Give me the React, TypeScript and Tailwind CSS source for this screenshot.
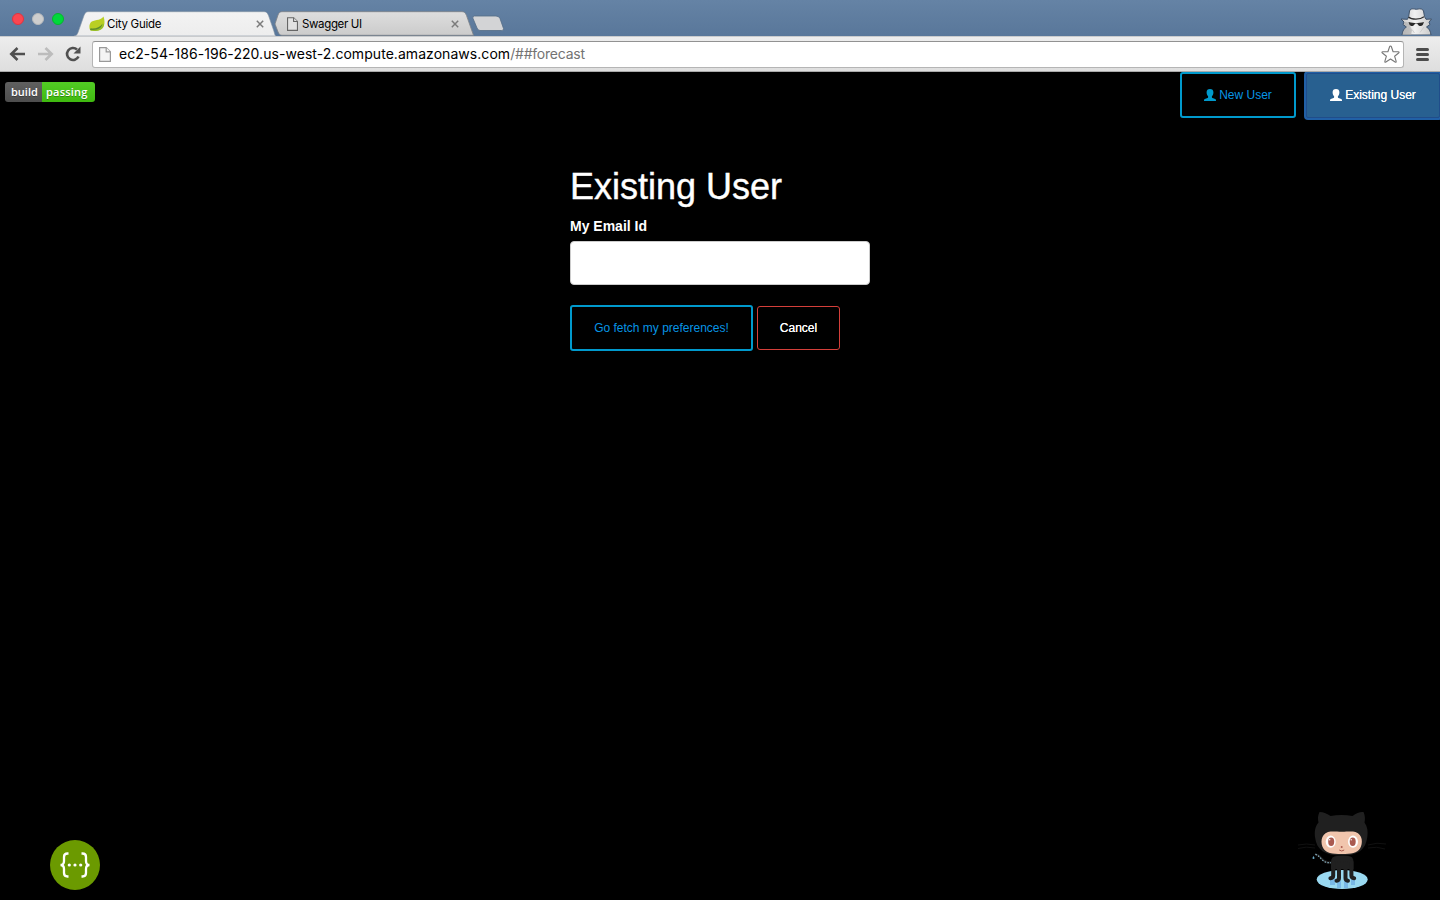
import React from "react";

function PersonIcon() {
  return (
    <svg width="12" height="12" viewBox="0 0 12 12" className="shrink-0" fill="currentColor">
      <path d="M6 0C8.300 0 9.400 1.200 9.400 3.300c0 1.800-.5 3.100-1.500 4v1c0 .4.200.6.600.8l2.700.9c.6.200.8.700.8 1.500v.5H0v-.5c0-.8.200-1.300.8-1.500l2.700-.9c.4-.2.600-.4.600-.8v-1c-1-.9-1.500-2.200-1.500-4C2.600 1.200 3.700 0 6 0z" />
    </svg>
  );
}

function PageIcon({ width, height, stroke, fill }: { width: number; height: number; stroke: string; fill: string }) {
  return (
    <svg width={width} height={height} viewBox="0 0 12 15" className="shrink-0" fill={fill} stroke={stroke} strokeWidth="1.2">
      <path d="M.6.6h6.600l4.200 4.200v9.600H.6z" />
      <path d="M7.200.6v4.200h4.200" />
    </svg>
  );
}

function LeafIcon() {
  return (
    <svg width="16" height="16" viewBox="0 0 16 16" className="shrink-0">
      <path d="M14.500.5c1.500 4 1.500 9.100-1.200 12-2.300 2.400-7.500 3-11.700 2C.1 13-.1 8.800 1.700 6.500 4.200 3.400 11.200 5.200 14.500.5z" fill="#b9cf24" />
      <path d="M1.500 14.300c5.300 1.400 9.800.3 12-2.300 1-1.300 1.500-3 1.600-4.800-2.600 4-7 6-13.600 6z" fill="#94bd29" />
      <path d="M2.800 12.600c4.500.2 8.400-1.500 10.800-5.100-.8 4.400-4.600 6.600-10.400 6.400z" fill="#5e8d2d" />
      <circle cx="2.100" cy="13.300" r="1" fill="#5e8d2d" />
    </svg>
  );
}

function CloseIcon() {
  return (
    <svg width="8" height="8" viewBox="0 0 8 8" className="shrink-0" stroke="#7b7b7b" strokeWidth="1.500">
      <path d="M.8.8l6.400 6.400M7.200.8L.8 7.200" />
    </svg>
  );
}

function IncognitoIcon() {
  return (
    <svg width="34" height="28" viewBox="0 0 34 28" className="block">
      <defs>
        <linearGradient id="coat" x1="0" x2="1">
          <stop offset="0" stopColor="#c4c4c4" />
          <stop offset=".45" stopColor="#f1f1f1" />
          <stop offset="1" stopColor="#c9c9c9" />
        </linearGradient>
      </defs>
      <path d="M3 28c.5-4 2-6.500 4.500-8L4 17.500l1-2.500-3-3 6.500.3c.4-1.300 1-1.800 1.200-2.800L10.500 4c.4-2 3-2.500 5-2 1.500.4 2 .4 3.500 0 2.500-.6 5 .2 5.500 2l1 5.500c.4 1 1 1.500 1.500 2.800l5.500-.3-2.500 3.200 1 2.300-3.500 2.500c2.500 1.500 4 4 4.500 8z" fill="url(#coat)" stroke="#3f526a" strokeWidth="1" strokeLinejoin="round" />
      <path d="M3.500 28c.5-3.500 2-6 5-7.700L5 17.500l.5-2.500 4 .5 3.500 7.500-1 5z" fill="#a8a8a8" opacity=".6" />
      <path d="M9.500 10c3 2.700 11.500 3 15.500-.2" fill="none" stroke="#2f2f2f" strokeWidth="1.300" />
      <path d="M9.500 15c3 .9 5.500 1 7.500 1s5.500-.1 8-1l-1 2.500c-.8 1.900-4 2-5 .2l-.8-1.200h-2l-.9 1.200c-1.200 1.800-4 1.700-4.900-.2z" fill="#292929" />
      <path d="M25 20l-4 5.500M13 22.500l2.500 3.500" fill="none" stroke="#c5c5c5" strokeWidth=".8" />
    </svg>
  );
}

function Octocat() {
  return (
    <svg width="88" height="80" viewBox="0 0 88 80" className="block">
      <ellipse cx="44.200" cy="69.500" rx="25.500" ry="9.500" fill="#9ad9f1" />
      <path d="M32 68h5v7h-5zM39 71h4v7h-4zM46 71h4v7h-4zM53 68h4v7h-4z" fill="#79b8e6" />
      <path d="M35 52.500c-6 1-9-1-11.500-4-1.500-2-3-3.500-6.500-4.500" fill="none" stroke="#202020" strokeWidth="2.200" />
      <path d="M34 52.500c-6 1-8.500-1-11-4-1.500-2-3-3-6-4.500" fill="none" stroke="#8db9cc" strokeWidth="1.100" strokeDasharray="1.500 1.500" />
      <path d="M15.500 46q2 3 0 3t0-3z" fill="#6ba9c6" />
      <path d="M33 52q0-6 6-6h11q5.500 0 5.500 6v7H33z" fill="#202020" />
      <g fill="none" stroke="#202020" strokeLinecap="round" strokeWidth="4">
        <path d="M35.200 52v13.500q0 2.500-2.800 2.800M41 53v15q0 2.500-2.500 2.800M47.500 53v15q0 2.500 2.500 2.800M53.400 52v13.500q0 2.500 2.800 2.800" />
      </g>
      <path d="M21.500 2c4 0 8 2 11 4 7-1.500 15-1.500 22 0 4-3 8-4.500 11-4 1.700 4 1.700 7 1 10.500 3 4 3.600 9 2.800 14.500C67.500 40 60 45.500 43.500 45.500S18.500 40 17 27c-.6-5.500 0-10.500 3.500-14.500-.8-3.500-.8-7 1-10.500z" fill="#202020" />
      <path d="M30 22c4-1 8-.3 13.700-.3S53.500 21 57.500 22c7.500 2.500 7.500 11.500 4.500 16.500-2.800 4.500-8.500 5.500-18.300 5.500s-15.500-1-18.300-5.500C22.400 33.500 22.500 24.500 30 22z" fill="#f1c5ad" />
      <g fill="#fff"><ellipse cx="32.700" cy="31.700" rx="5" ry="6.100" /><ellipse cx="55" cy="31.700" rx="5" ry="6.100" /></g>
      <g fill="#aa5a50"><ellipse cx="33.200" cy="31.700" rx="3" ry="4.200" /><ellipse cx="54.700" cy="31.700" rx="3" ry="4.200" /></g>
      <g fill="#fff"><circle cx="31.700" cy="29.700" r=".7" /><circle cx="53.200" cy="29.700" r=".7" /></g>
      <circle cx="43.700" cy="37" r="1" fill="#ad5c51" />
      <path d="M41.200 40q2.500 2 5 0" fill="none" stroke="#ad5c51" />
      <path d="M17 35Q8 33 0 35M17 38Q8 36 0 38.500M70 35q9-3 18-1M70 38q9-2 17 1" fill="none" stroke="#151515" strokeWidth=".8" />
    </svg>
  );
}

function Tab({ title, active, icon }: { title: string; active?: boolean; icon: React.ReactNode }) {
  return (
    <div className={active ? "relative z-10 h-[25px] w-[202px] shrink-0" : "relative -ml-[3px] h-[25px] w-[201px] shrink-0"}>
      <svg className="absolute inset-0" width="202" height="25" viewBox="0 0 202 25">
        <defs>
          <linearGradient id="activeTab" x1="0" y1="0" x2="0" y2="1">
            <stop offset="0" stopColor="#f3f3f3" />
            <stop offset="1" stopColor="#ededed" />
          </linearGradient>
          <linearGradient id="idleTab" x1="0" y1="0" x2="0" y2="1">
            <stop offset="0" stopColor="#dedede" />
            <stop offset="1" stopColor="#cbcbcb" />
          </linearGradient>
        </defs>
        {active ? (
          <path d="M0 25c2 0 3-1 4-3.500L10 4.500C11 2 12 .7 14 .7h176c2.500 0 3.500 1.300 4.500 3.800l5 14.500c1 3 1.500 6 2.500 6z" fill="url(#activeTab)" stroke="#8795a5" strokeWidth=".6" />
        ) : (
          <path d="M2 13L5 4C6 1.500 7 .7 9 .7h180c2.500 0 3.500 1.300 4.500 3.800l7 19.800H9c-2 0-3-1-4-3.500z" fill="url(#idleTab)" stroke="#7d8287" strokeWidth=".8" />
        )}
      </svg>
      <div className={active ? "relative flex h-full items-center pr-[12px] pl-[15px]" : "relative flex h-full items-center pr-[15px] pl-[14px]"}>
        {icon}
        <span className={active ? "ml-[2px] text-[11.500px] leading-4 tracking-[-0.25px] text-black" : "ml-1 text-[11.500px] leading-4 tracking-[-0.35px] text-black"}>{title}</span>
        <span className="ml-auto"><CloseIcon /></span>
      </div>
    </div>
  );
}

function BrowserHeader() {
  return (
    <header className="font-[Inter,sans-serif]">
      <div className="flex h-[36px] bg-linear-to-b from-[#6583a5] to-[#59779a] pt-[11px]">
        <div className="flex w-[74px] shrink-0 gap-2 pt-[2px] pl-3">
          <span className="size-3 shrink-0 rounded-full border border-[#df3440] bg-[#fc4650]" />
          <span className="size-3 shrink-0 rounded-full border border-[#b7b9bb] bg-[#cecece]" />
          <span className="size-3 shrink-0 rounded-full border border-[#06b52d] bg-[#00d83b]" />
        </div>
        <Tab title="City Guide" active icon={<LeafIcon />} />
        <Tab title="Swagger UI" icon={<PageIcon width={11} height={14} stroke="#666" fill="#e2e2e2" />} />
        <svg width="34" height="18" viewBox="0 0 34 18" className="-ml-[3px] mt-[4px]">
          <path d="M3.500 1H25q3 0 4 2.500l3.500 10q.7 2-2 2H9q-2 0-3-2.500L2 3.500Q1 1 3.500 1z" fill="#d3d4d6" stroke="#536c87" strokeWidth=".8" />
        </svg>
        <div className="-mt-[4px] mr-[7px] ml-auto"><IncognitoIcon /></div>
      </div>
      <div className="flex h-[36px] items-center border-t border-b border-t-[#c9cbcd] border-b-[#aaa] bg-linear-to-b from-[#ededed] to-[#dedede]">
        <div className="flex w-[92px] shrink-0 items-center pl-[9px]">
          <svg width="17" height="14" viewBox="0 0 17 14" fill="none" stroke="#505050" strokeWidth="2.600"><path d="M16 7H3M8.500 1L2.300 7l6.200 6" /></svg>
          <svg width="17" height="14" viewBox="0 0 17 14" className="ml-[11px]" fill="none" stroke="#bcbcbc" strokeWidth="2.600"><path d="M1 7h13M8.500 1l6.200 6-6.200 6" /></svg>
          <svg width="16" height="16" viewBox="0 0 16 16" className="ml-[11px]"><path d="M13.500 10.500A6 6 0 1 1 12 3.500" fill="none" stroke="#505050" strokeWidth="2.600" /><path d="M15.500.5v7h-7z" fill="#505050" /></svg>
        </div>
        <div className="flex h-[27px] w-[1312px] shrink-0 items-center rounded-[3px] border border-[#b5b5b5] border-t-[#929292] bg-white pr-[3px] pl-[6px]">
          <PageIcon width={12} height={15} stroke="#999" fill="#f4f4f4" />
          <div className="ml-[8px] text-[14px] leading-5 tracking-[0.05px] whitespace-nowrap text-black">ec2-54-186-196-220.us-west-2.compute.amazonaws.com<span className="tracking-[-0.22px] text-[#737373]">/##forecast</span></div>
          <svg width="19" height="19" viewBox="0 0 19 19" className="ml-auto" fill="#fff" stroke="#777" strokeWidth="1.100" strokeLinejoin="round"><path d="M9.500 1q.6 0 .9.800l1.700 4.900 5.100.1q1.500.2.4 1.200l-4 3.200 1.500 5q.3 1.600-1 .8l-4.600-3-4.600 3q-1.300.8-1-.8l1.500-5-4-3.200Q.3 7 1.800 6.800l5.100-.1 1.700-4.900q.3-.8.9-.8z" /></svg>
        </div>
        <div className="ml-[12px] flex w-[13px] flex-col gap-[2px]">
          <span className="h-[3px] rounded-full bg-[#4c4c4c]" />
          <span className="h-[3px] rounded-full bg-[#4c4c4c]" />
          <span className="h-[3px] rounded-full bg-[#4c4c4c]" />
        </div>
      </div>
    </header>
  );
}

export default function App() {
  return (
    <div className="flex h-[900px] w-[1440px] flex-col overflow-hidden bg-black font-['Liberation_Sans',Arial,sans-serif] text-white">
      <BrowserHeader />
      <main className="flex min-h-0 flex-1 flex-col">
        <div className="flex h-[93px] items-start justify-between">
          <div className="mt-[10px] ml-[5px] flex h-5 w-[90px] overflow-hidden rounded-[3px] font-['Open_Sans',sans-serif] text-[11px] leading-5 font-semibold [text-shadow:0_1px_0_rgba(1,1,1,0.3)]">
            <span className="w-[37px] bg-linear-to-b from-[#606060] to-[#4d4d4d] pl-[6px]">build</span>
            <span className="w-[53px] bg-linear-to-b from-[#52cc24] to-[#3fb90f] pl-[4px] tracking-[0.2px]">passing</span>
          </div>
          <nav className="flex overflow-hidden pb-1">
            <button className="flex h-[46px] w-[116px] items-center justify-center gap-[3px] rounded-[3px] border-2 border-[#0099cc] text-[12px] text-[#0795e5]"><span className="text-[#0099cc]"><PersonIcon /></span>New User</button>
            <button className="mt-px ml-[10px] flex h-[45px] w-[134px] items-center justify-center gap-[3px] rounded-[2px] border border-[#204d8a] bg-[#286090] pb-[2px] text-[12px] text-white ring-2 ring-[#2160a6] [text-shadow:0_0_0.5px_white]"><PersonIcon />Existing User</button>
          </nav>
        </div>
        <form className="ml-[570px] w-[300px]" onSubmit={(e) => e.preventDefault()}>
          <h1 className="text-[36px] leading-[44px] font-normal [-webkit-text-stroke:0.4px_white]">Existing User</h1>
          <label htmlFor="email" className="mt-[7px] block text-[14px] leading-5 font-bold">My Email Id</label>
          <input id="email" type="email" className="mt-[5px] block h-[44px] w-full rounded-[4px] border border-[#ccc] bg-white px-3 text-black" />
          <div className="mt-5 flex items-center gap-1">
            <button className="h-[46px] w-[183px] rounded-[3px] border-2 border-[#0099cc] text-[12px] whitespace-nowrap text-[#0795e5]">Go fetch my preferences!</button>
            <button className="h-[44px] w-[83px] rounded-[3px] border border-[#d43f3a] text-[12px] [text-shadow:0_0_0.5px_white]">Cancel</button>
          </div>
        </form>
        <footer className="mt-auto flex items-end justify-between pr-[54px] pb-[10px] pl-[50px]">
          <svg width="50" height="50" viewBox="0 0 50 50" className="block">
            <circle cx="25" cy="25" r="25" fill="#6b9a00" />
            <g fill="none" stroke="#fff" strokeWidth="2.300"><path d="M18.500 13.500h-1q-3.500 0-3.500 3.500v4q0 4-3.500 4 3.500 0 3.500 4v4q0 3.500 3.500 3.500h1M31.500 13.500h1q3.500 0 3.500 3.500v4q0 4 3.500 4-3.500 0-3.500 4v4q0 3.500-3.500 3.500h-1" /></g>
            <g fill="#fff"><circle cx="19.300" cy="25" r="1.600" /><circle cx="25" cy="25" r="1.600" /><circle cx="30.700" cy="25" r="1.600" /></g>
          </svg>
          <Octocat />
        </footer>
      </main>
    </div>
  );
}
